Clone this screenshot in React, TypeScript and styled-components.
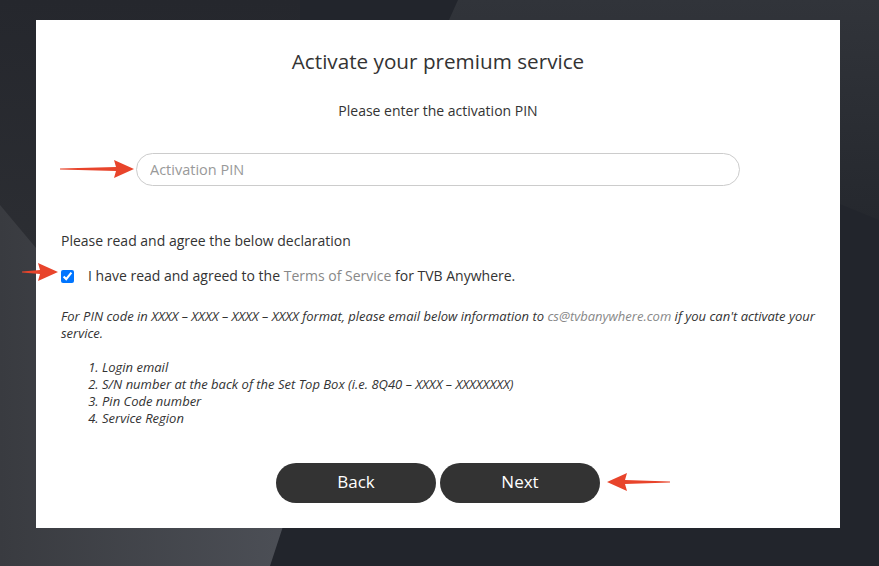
import React from "react";
import styled, { createGlobalStyle } from "styled-components";

const GlobalStyle = createGlobalStyle`
  html, body { margin: 0; padding: 0; }
  body {
    width: 879px;
    height: 566px;
    overflow: hidden;
    background: #22252c;
    font-family: "Open Sans", "Noto Sans", Arial, sans-serif;
  }
`;

const Page = styled.div`
  position: relative;
  width: 879px;
  height: 566px;
  box-sizing: border-box;
  padding: 20px 39px 38px 36px;
`;

const Backdrop = styled.svg`
  position: absolute;
  inset: 0;
  z-index: 0;
`;

const Card = styled.main`
  position: relative;
  z-index: 1;
  width: 804px;
  height: 508px;
  box-sizing: border-box;
  background: #ffffff;
  padding: 0 25px;
  display: flex;
  flex-direction: column;
  color: #333333;
`;

const Title = styled.h1`
  margin: 27px 0 0;
  font-size: 20.7px;
  line-height: 28px;
  font-weight: 500;
  text-align: center;
  color: #333;
`;

const Subtitle = styled.p`
  margin: 26px 0 0;
  font-size: 14px;
  line-height: 20px;
  text-align: center;
  color: #333;
`;

const PinInput = styled.input`
  display: block;
  margin: 32px auto 0;
  width: 604px;
  height: 33px;
  box-sizing: border-box;
  border: 1px solid #cccccc;
  border-radius: 17px;
  padding: 0 13px;
  font-family: inherit;
  font-size: 14.5px;
  color: #333;
  outline: none;
  &::placeholder { color: #999999; }
`;

const Label = styled.p`
  margin: 45px 0 0;
  font-size: 14px;
  line-height: 20px;
  color: #333;
`;

const CheckRow = styled.label`
  margin-top: 15px;
  display: flex;
  align-items: center;
  gap: 14px;
  font-size: 14px;
  line-height: 20px;
  color: #333;
`;

const Check = styled.input`
  margin: 0;
  width: 13px;
  height: 13px;
`;

const Muted = styled.span`
  color: #888888;
`;

const Note = styled.p`
  margin: 22px 0 0;
  font-size: 13px;
  line-height: 17px;
  font-style: italic;
  color: #333;
`;

const List = styled.ol`
  margin: 17px 0 0;
  padding-left: 41px;
  font-size: 13px;
  line-height: 17px;
  font-style: italic;
  color: #333;
`;

const Buttons = styled.div`
  margin-top: 36px;
  display: flex;
  justify-content: center;
  gap: 4px;
`;

const PillButton = styled.button`
  width: 160px;
  height: 40px;
  padding: 0 0 3px;
  border: none;
  border-radius: 20px;
  background: #333333;
  color: #ffffff;
  font-family: inherit;
  font-size: 17px;
  cursor: pointer;
`;

const Arrow = styled.svg<{ $x: number; $y: number }>`
  position: absolute;
  z-index: 2;
  left: ${(p) => p.$x}px;
  top: ${(p) => p.$y}px;
`;

function RedArrow({ x, y, w, flip }: { x: number; y: number; w: number; flip?: boolean }) {
  const h = 18;
  const head = 18;
  const d = `M0 ${h / 2 - 0.6} L${w - head} ${h / 2 - 2} L${w - head - 2} 0 L${w} ${h / 2} L${w - head - 2} ${h} L${w - head} ${h / 2 + 2} L0 ${h / 2 + 0.6} Z`;
  return (
    <Arrow $x={x} $y={y} width={w} height={h} viewBox={`0 0 ${w} ${h}`}>
      <path d={d} fill="#e8442b" transform={flip ? `translate(${w} 0) scale(-1 1)` : undefined} />
    </Arrow>
  );
}

export default function App() {
  return (
    <>
      <GlobalStyle />
      <Page>
        <Backdrop width="879" height="566" viewBox="0 0 879 566">
          <defs>
            <linearGradient id="lg" x1="0" y1="0" x2="1" y2="0">
              <stop offset="0" stopColor="#393b40" />
              <stop offset="1" stopColor="#4c4f56" />
            </linearGradient>
            <linearGradient id="tr" x1="0" y1="0" x2="0" y2="1">
              <stop offset="0" stopColor="#31343a" />
              <stop offset="1" stopColor="#25282e" />
            </linearGradient>
            <linearGradient id="tl" x1="0" y1="0" x2="0" y2="1">
              <stop offset="0" stopColor="#25272d" />
              <stop offset="1" stopColor="#2c2e33" />
            </linearGradient>
          </defs>
          <rect x="0" y="0" width="879" height="566" fill="#22252c" />
          <rect x="0" y="0" width="300" height="260" fill="url(#tl)" />
          <polygon points="458,0 879,0 879,220 440,40" fill="url(#tr)" />
          <polygon points="0,205 36,248 290,505 270,566 0,566" fill="url(#lg)" />
        </Backdrop>
        <Card>
          <Title>Activate your premium service</Title>
          <Subtitle>Please enter the activation PIN</Subtitle>
          <PinInput type="text" placeholder="Activation PIN" />
          <Label>Please read and agree the below declaration</Label>
          <CheckRow>
            <Check type="checkbox" defaultChecked />
            <span>
              I have read and agreed to the <Muted>Terms of Service</Muted> for TVB Anywhere.
            </span>
          </CheckRow>
          <Note>
            For PIN code in XXXX – XXXX – XXXX – XXXX format, please email below information to{" "}
            <Muted>cs@tvbanywhere.com</Muted> if you can't activate your service.
          </Note>
          <List>
            <li>Login email</li>
            <li>S/N number at the back of the Set Top Box (i.e. 8Q40 – XXXX – XXXXXXXX)</li>
            <li>Pin Code number</li>
            <li>Service Region</li>
          </List>
          <Buttons>
            <PillButton type="button">Back</PillButton>
            <PillButton type="button">Next</PillButton>
          </Buttons>
        </Card>
        <RedArrow x={60} y={160} w={74} />
        <RedArrow x={22} y={263} w={36} />
        <RedArrow x={607} y={473} w={63} flip />
      </Page>
    </>
  );
}
